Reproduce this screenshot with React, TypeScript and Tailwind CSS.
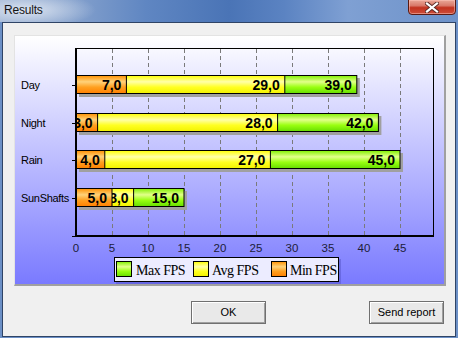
import React from "react";

const X0 = 76;
const SC = 7.2;
const cats = [
  { name: "Day", top: 75, min: 7, avg: 29, max: 39 },
  { name: "Night", top: 113, min: 3, avg: 28, max: 42 },
  { name: "Rain", top: 150, min: 4, avg: 27, max: 45 },
  { name: "SunShafts", top: 188, min: 5, avg: 8, max: 15 },
];
const fmt = (v: number) => v.toFixed(1).replace(".", ",");
const xe = (v: number) => X0 + v * SC;

function Bar({ top, v, fill }: { top: number; v: number; fill: string }) {
  const end = xe(v);
  return (
    <g>
      <rect x={76.5} y={top + 0.5} width={end - 76.5} height={18} fill={fill} stroke="#000" strokeWidth={1} />
      <text
        x={end - 5}
        y={top + 15}
        textAnchor="end"
        fontFamily="'Liberation Sans', Arial, sans-serif"
        fontWeight="bold"
        fontSize={14}
        fill="#000"
        clipPath="url(#plotclip)"
      >
        {fmt(v)}
      </text>
    </g>
  );
}

function Chart() {
  const grid = [5, 10, 15, 20, 25, 30, 35, 40, 45];
  const ticksY = [85, 123, 160, 198, 236];
  return (
    <svg width={428} height={248} viewBox="15 36 428 248" className="block">
      <defs>
        <linearGradient id="gGreen" x1="0" y1="0" x2="0" y2="1">
          <stop offset="0%" stopColor="#80f000" />
          <stop offset="35%" stopColor="#e2ff8a" />
          <stop offset="65%" stopColor="#99ff11" />
          <stop offset="100%" stopColor="#66dd00" />
        </linearGradient>
        <linearGradient id="gYellow" x1="0" y1="0" x2="0" y2="1">
          <stop offset="0%" stopColor="#ffff00" />
          <stop offset="35%" stopColor="#ffffa8" />
          <stop offset="65%" stopColor="#ffff22" />
          <stop offset="100%" stopColor="#f2f200" />
        </linearGradient>
        <linearGradient id="gOrange" x1="0" y1="0" x2="0" y2="1">
          <stop offset="0%" stopColor="#ff9000" />
          <stop offset="35%" stopColor="#ffd27a" />
          <stop offset="65%" stopColor="#ffa020" />
          <stop offset="100%" stopColor="#ff8000" />
        </linearGradient>
        <clipPath id="plotclip">
          <rect x={77} y={48} width={356} height={188} />
        </clipPath>
      </defs>

      {/* grid */}
      {grid.map((g) => {
        const x = Math.round(xe(g)) + 0.5;
        return <line key={g} x1={x} y1={49} x2={x} y2={235} stroke="#7a7a7a" strokeWidth={1} strokeDasharray="4 3" />;
      })}

      {/* shadows */}
      {cats.map((c) => (
        <rect key={c.name + "s"} x={79} y={c.top + 3} width={xe(c.max) - 76} height={19} fill="#a0a0a0" />
      ))}

      {/* bars */}
      {cats.map((c) => (
        <g key={c.name}>
          <Bar top={c.top} v={c.max} fill="url(#gGreen)" />
          <Bar top={c.top} v={c.avg} fill="url(#gYellow)" />
          <Bar top={c.top} v={c.min} fill="url(#gOrange)" />
        </g>
      ))}

      {/* plot frame */}
      <line x1={76} y1={48.5} x2={434} y2={48.5} stroke="#000" strokeWidth={1} />
      <line x1={433.5} y1={48} x2={433.5} y2={237} stroke="#000" strokeWidth={1} />
      <line x1={76} y1={48} x2={76} y2={237} stroke="#000" strokeWidth={2} />
      <line x1={75} y1={236} x2={434} y2={236} stroke="#000" strokeWidth={2} />
      {ticksY.map((y) => (
        <line key={y} x1={72} y1={y + 0.5} x2={76} y2={y + 0.5} stroke="#000" strokeWidth={1} />
      ))}

      {/* category labels */}
      {cats.map((c) => (
        <text
          key={c.name + "l"}
          x={21}
          y={c.top + 14}
          fontFamily="'Liberation Sans', Arial, sans-serif"
          fontSize={11}
          letterSpacing={-0.3}
          fill="#000"
        >
          {c.name}
        </text>
      ))}

      {/* x labels */}
      {[0, ...grid].map((g) => (
        <text
          key={"x" + g}
          x={xe(g)}
          y={252}
          textAnchor="middle"
          fontFamily="'Liberation Sans', Arial, sans-serif"
          fontSize={11.5}
          fill="#1c1c38"
        >
          {g}
        </text>
      ))}

      {/* legend */}
      <rect x={116} y={259} width={225} height={25} fill="#5050c0" opacity={0.45} />
      <rect x={114.5} y={257.5} width={224} height={24} fill="#ececff" stroke="#000" strokeWidth={1} />
      {[
        { x: 116, tx: 136, fill: "url(#gGreen)", label: "Max FPS" },
        { x: 193, tx: 212, fill: "url(#gYellow)", label: "Avg FPS" },
        { x: 271, tx: 290, fill: "url(#gOrange)", label: "Min FPS" },
      ].map((l) => (
        <g key={l.label}>
          <rect x={l.x + 0.5} y={261.5} width={15} height={15} fill={l.fill} stroke="#000" strokeWidth={1} />
          <text
            x={l.tx}
            y={274.5}
            fontFamily="'Liberation Serif', 'Times New Roman', serif"
            fontSize={14}
            letterSpacing={-0.5}
            fill="#000"
          >
            {l.label}
          </text>
        </g>
      ))}
    </svg>
  );
}

export default function App() {
  return (
    <div className="w-[458px] h-[338px] flex flex-col overflow-hidden bg-[#6c90c6] font-['Liberation_Sans',Arial,sans-serif]">
      <div className="h-[22px] flex items-start justify-between bg-[radial-gradient(ellipse_70px_18px_at_26px_10px,rgba(222,230,242,0.95),rgba(222,230,242,0)),linear-gradient(to_right,#9bb1d2_0%,#86a2cd_15%,#5f86c2_32%,#4a74b6_50%,#5b83c2_62%,#7fa0d3_76%,#6d92c9_100%)]">
        <div className="pl-[4px] pt-[3px] text-[12px] leading-[14px] tracking-[-0.2px] text-[#141414]">Results</div>
        <div className="w-[48px] h-[16px] -mt-[1px] mr-[2px] rounded-b-[4px] border border-[#5a1a12] bg-[linear-gradient(to_bottom,#e9a898_0%,#d9796a_40%,#c2321f_55%,#cc4d38_100%)] shadow-[inset_0_0_0_1px_rgba(255,200,190,0.5)] flex items-center justify-center">
          <svg width="14" height="11" viewBox="0 0 14 11">
            <path d="M2 1.5 L12 9.5 M12 1.5 L2 9.5" stroke="#5a2a26" strokeWidth="4" strokeLinecap="square" />
            <path d="M2 1.5 L12 9.5 M12 1.5 L2 9.5" stroke="#ffffff" strokeWidth="2.2" strokeLinecap="square" />
          </svg>
        </div>
      </div>
      <div className="flex-1 mx-[2px] mb-[1px] border border-[#2f4466] bg-[#f0f0f0] flex flex-col">
        <div className="ml-[11px] mt-[12px] w-[432px] h-[251px] border-t border-l border-t-[#e3e3e3] border-l-[#e3e3e3] border-r-2 border-b-2 border-r-[#a0a0a0] border-b-[#a0a0a0]">
          <div className="w-full h-full bg-[linear-gradient(to_bottom,#ffffff,#7a7aff)]">
            <Chart />
          </div>
        </div>
        <div className="mt-[15px] flex justify-end gap-[103px] pr-[11px]">
          <button className="w-[75px] h-[23px] border border-[#707070] bg-[#e9e9e9] shadow-[inset_1px_1px_0_#ffffff,inset_-1px_-1px_0_#a0a0a0] text-[11px] text-black">
            OK
          </button>
          <button className="w-[75px] h-[23px] border border-[#707070] bg-[#e9e9e9] shadow-[inset_1px_1px_0_#ffffff,inset_-1px_-1px_0_#a0a0a0] text-[11px] text-black">
            Send report
          </button>
        </div>
      </div>
    </div>
  );
}
